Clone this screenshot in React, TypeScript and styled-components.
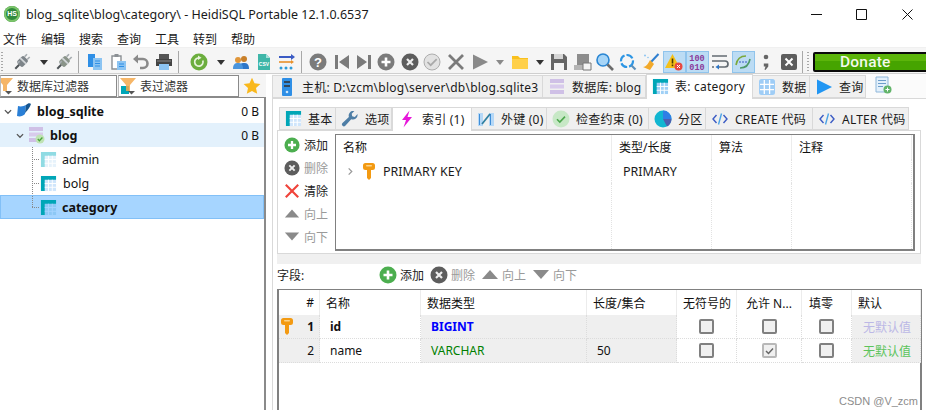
import React from "react";
import styled, { createGlobalStyle } from "styled-components";

const GlobalStyle = createGlobalStyle`
  html, body { margin: 0; padding: 0; background: #fff; }
  body {
    width: 926px; height: 410px; overflow: hidden;
    font-family: "Noto Sans", "Noto Sans CJK SC", sans-serif;
    font-size: 12px; color: #1a1a1a;
  }
`;

const G = ({ s = 18, children }: { s?: number; children: React.ReactNode }) => (
  <svg width={s} height={s} viewBox="0 0 18 18">{children}</svg>
);

// ---------- icons ----------
const Plug = ({ accent = "#7d8489" }: { accent?: string }) => (
  <G>
    <g transform="rotate(45 9 9)">
      <rect x="5" y="3.5" width="8" height="9.500" rx="2" fill={accent} />
      <rect x="6.300" y="0" width="1.600" height="3.500" fill="#a5abaf" />
      <rect x="10.100" y="0" width="1.600" height="3.500" fill="#a5abaf" />
      <rect x="8" y="13" width="2" height="5.500" fill="#4f5558" />
      <rect x="5" y="6.500" width="8" height="1.800" fill="#d2d6d9" />
      <rect x="6" y="10" width="1.500" height="3" fill="#a9afb3" />
    </g>
  </G>
);
const Arrow = ({ color = "#333" }: { color?: string }) => (
  <svg width="8" height="5" viewBox="0 0 8 5"><path d="M0 0h8L4 5z" fill={color} /></svg>
);
const Docs = () => (
  <G>
    <path d="M2 1h7v13H2z" fill="#2f8fe6" />
    <path d="M7 5h9v12H7z" fill="#8cc4f2" />
    <path d="M9 8h5M9 10.5h5M9 13h5" stroke="#2f8fe6" strokeWidth="1" />
  </G>
);
const Paste = () => (
  <G>
    <path d="M3 3h9v13H3z" fill="#fff" stroke="#8b9094" strokeWidth="1.4" />
    <path d="M5.5 1h4v3h-4z" fill="#8b9094" />
    <path d="M8 8h9v9H8z" fill="#8cc4f2" />
    <path d="M10 11h5M10 13.5h5" stroke="#2f8fe6" />
  </G>
);
const Undo = () => (
  <G>
    <path d="M1 6l5-4.500v9z" fill="#8a8a8a" />
    <path d="M5 6h6a4.500 4.500 0 0 1 0 9H8" fill="none" stroke="#8a8a8a" strokeWidth="2.6" />
  </G>
);
const Printer = () => (
  <G>
    <path d="M4 1h10v5H4z" fill="#555" />
    <path d="M1 6h16v7H1z" fill="#444" />
    <path d="M4 11h10v6H4z" fill="#8cc4f2" />
    <path d="M2 8h14" stroke="#888" />
  </G>
);
const Refresh = () => (
  <G>
    <circle cx="9" cy="9" r="8.5" fill="#6cae3e" />
    <path d="M12.8 7.5A4.2 4.2 0 1 1 9 4.8" fill="none" stroke="#e8f4dd" strokeWidth="1.7" />
    <path d="M8 2.5l3.500 2.300L8 7z" fill="#e8f4dd" />
  </G>
);
const Users = () => (
  <G>
    <circle cx="12" cy="6" r="3" fill="#c9802a" />
    <path d="M7 16c0-5 2-6 5-6s5 1 5 6z" fill="#2f77c8" />
    <circle cx="6" cy="7" r="3" fill="#e0963a" />
    <path d="M1 16c0-5 2-6 5-6s5 1 5 6z" fill="#4a95dd" />
  </G>
);
const Csv = () => (
  <G>
    <path d="M3 1h8l4 4v12H3z" fill="#3fb6a8" />
    <path d="M11 1l4 4h-4z" fill="#a5e0d9" />
    <text x="9" y="13" fontSize="5" fontWeight="700" textAnchor="middle" fill="#fff" fontFamily="Liberation Sans">CSV</text>
  </G>
);
const Transfer = () => (
  <G>
    <path d="M1 4h13" stroke="#3b5bc4" strokeWidth="2" />
    <path d="M13 1l4 3-4 3z" fill="#3b5bc4" />
    <path d="M1 9h13" stroke="#e8902a" strokeWidth="1.6" />
    <path d="M13 7l3 2-3 2z" fill="#e8902a" />
    <circle cx="3" cy="15" r="1.5" fill="#2d9bd8" />
    <circle cx="8" cy="15" r="1.5" fill="#2d9bd8" />
    <circle cx="13" cy="15" r="1.5" fill="#2d9bd8" />
  </G>
);
const Help = () => (
  <G>
    <circle cx="9" cy="9" r="8.5" fill="#7b7b7b" />
    <text x="9" y="13.5" fontSize="13" fontWeight="700" textAnchor="middle" fill="#fff" fontFamily="Liberation Sans">?</text>
  </G>
);
const First = () => (
  <G><path d="M2 2h3v14H2zM16 2v14L6 9z" fill="#7b7b7b" /></G>
);
const Last = () => (
  <G><path d="M13 2h3v14h-3zM2 2v14l10-7z" fill="#7b7b7b" /></G>
);
const PlusCircle = ({ bg = "#7b7b7b" }: { bg?: string }) => (
  <G>
    <circle cx="9" cy="9" r="8.5" fill={bg} />
    <path d="M9 4.500v9M4.500 9h9" stroke="#fff" strokeWidth="2.6" />
  </G>
);
const XCircle = ({ bg = "#5d5d5d" }: { bg?: string }) => (
  <G>
    <circle cx="9" cy="9" r="8.5" fill={bg} />
    <path d="M6 6l6 6M12 6l-6 6" stroke="#eee" strokeWidth="2.2" />
  </G>
);
const CheckCircle = () => (
  <G>
    <circle cx="9" cy="9" r="8" fill="#e2e2e2" stroke="#adadad" />
    <path d="M4.5 9l3.200 3.200 6-6" fill="none" stroke="#a9a9a9" strokeWidth="1.7" />
  </G>
);
const BigX = ({ color = "#7b7b7b" }: { color?: string }) => (
  <G><path d="M2 2l14 14M16 2L2 16" stroke={color} strokeWidth="2.8" /></G>
);
const Play = ({ color = "#8a8a8a" }: { color?: string }) => (
  <G><path d="M2 1.5v15L17 9z" fill={color} /></G>
);
const Folder = () => (
  <G>
    <path d="M1 3h6l2 2h8v11H1z" fill="#f9c01e" />
    <path d="M1 6h16v10H1z" fill="#ffd04a" />
  </G>
);
const Floppy = ({ color = "#666" }: { color?: string }) => (
  <G>
    <path d="M1 1h13l3 3v13H1z" fill={color} />
    <path d="M4 1h9v5H4z" fill="#d5d5d5" />
    <path d="M4 10h10v7H4z" fill="#f4f4f4" />
  </G>
);
const SaveAs = () => (
  <G>
    <path d="M3 1h12v11H3z" fill="#8d8d8d" />
    <path d="M0 12h12v5H0z" fill="#b5b5b5" />
    <path d="M9 10h8v7H9z" fill="#f4f4f4" stroke="#777" />
  </G>
);
const Search = () => (
  <G>
    <circle cx="7" cy="7" r="6" fill="#a7d5f7" stroke="#2a86d3" strokeWidth="1.6" />
    <path d="M11.5 11.5l5.500 5.500" stroke="#6b6b6b" strokeWidth="2.6" />
  </G>
);
const Replace = () => (
  <G>
    <circle cx="8" cy="8" r="6" fill="none" stroke="#2e96e4" strokeWidth="2.2" strokeDasharray="7 2" />
    <path d="M12.5 12.5l4 4" stroke="#5d8fb8" strokeWidth="2.2" />
  </G>
);
const Broom = () => (
  <G>
    <path d="M16.5 1L9 9" stroke="#2f7fd0" strokeWidth="2" />
    <path d="M8 7l4 4-4 6-7-3c3 0 5-3 7-7z" fill="#f2a92a" />
    <circle cx="3" cy="2.5" r="1" fill="#8cc4f2" />
    <circle cx="6" cy="4.5" r=".8" fill="#8cc4f2" />
  </G>
);
const Warn = () => (
  <G>
    <path d="M7.5 1L15 15H0z" fill="#f5c018" />
    <path d="M7.5 5.5v5M7.5 11.5v1.800" stroke="#4a3a00" strokeWidth="1.6" />
    <circle cx="13.5" cy="13.5" r="4" fill="#e8483f" />
    <path d="M12 12l3 3M15 12l-3 3" stroke="#fff" />
  </G>
);
const Binary = () => (
  <G>
    <text x="9" y="8" fontSize="8.5" fontWeight="700" textAnchor="middle" fill="#8a3a9a" fontFamily="Liberation Mono">100</text>
    <text x="9" y="16.5" fontSize="8.5" fontWeight="700" textAnchor="middle" fill="#8a3a9a" fontFamily="Liberation Mono">010</text>
  </G>
);
const WrapLines = () => (
  <G>
    <path d="M1 3h15M1 8h13a3 3 0 0 1 0 6H8" fill="none" stroke="#636b72" strokeWidth="1.7" />
    <path d="M8 11.5v5L4.500 14z" fill="#2f77c8" />
    <path d="M1 14h2" stroke="#636b72" strokeWidth="1.7" />
  </G>
);
const Sync = () => (
  <G>
    <path d="M2 12C3 6 6 3 12 3" fill="none" stroke="#7ba83d" strokeWidth="1.6" />
    <path d="M16 6c-1 6-4 9-10 9" fill="none" stroke="#4f9a6a" strokeWidth="1.6" />
    <path d="M5 9h8" stroke="#3b5bc4" strokeDasharray="2 1" />
  </G>
);
const Semi = () => (
  <G>
    <circle cx="9" cy="4" r="2.3" fill="#666" />
    <path d="M6.8 10.5h4.500v3L8.500 17l-1-.6 1-3h-1.700z" fill="#666" />
  </G>
);
const XBox = () => (
  <G>
    <rect x="1" y="1" width="16" height="16" rx="2" fill="#5d5d5d" />
    <path d="M5.5 5.5l7 7M12.5 5.5l-7 7" stroke="#fff" strokeWidth="2" />
  </G>
);
const Funnel = ({ children }: { children?: React.ReactNode }) => (
  <G>
    {children}
    <path d="M1 1h16l-6 7v6H7V8z" fill="#f4a94e" opacity=".85" />
    <path d="M9 14h7l-3.500 3.500z" fill="#555" />
  </G>
);
const Star = () => (
  <G>
    <path d="M9 .8l2.500 5.400 5.900.7-4.400 4 1.200 5.900L9 13.900l-5.200 2.900L5 10.900.6 6.900l5.900-.7z" fill="#f9b81c" />
  </G>
);
const Server = () => (
  <G>
    <rect x="4" y="0" width="10" height="18" rx="1" fill="#2f8fe6" />
    <path d="M6 3h6v2H6zM6 7h6v2H6z" fill="#33475b" />
    <circle cx="9" cy="14" r="1.3" fill="#cfe7fb" />
  </G>
);
const DbIcon = ({ ok }: { ok?: boolean }) => (
  <G>
    <path d="M2 1h14v4H2z" fill="#cfc0e6" />
    <path d="M2 6.500h14v4H2z" fill="#d8cbec" />
    <path d="M2 12h14v4H2z" fill="#cfc0e6" />
    {ok && (
      <>
        <circle cx="13" cy="13" r="4.5" fill="#bfe3b4" />
        <path d="M10.8 13l1.600 1.700 3-3.200" fill="none" stroke="#49a53a" strokeWidth="1.3" />
      </>
    )}
  </G>
);
const TableIcon = ({ head = "#00a6b7", body = "#cfe5fb", line = "#fff" }: { head?: string; body?: string; line?: string }) => (
  <G s={17}>
    <rect x="1" y="1" width="16" height="16" fill={body} />
    <path d="M1 1h16v4H5v12H1z" fill={head} />
    <path d="M9 5v12M13 5v12M5 9h12M5 13h12" stroke={line} strokeWidth="1" />
  </G>
);
const GridBlue = () => (
  <G>
    <rect x="1" y="1" width="16" height="16" rx="2.5" fill="#9fcdf6" />
    <path d="M6.3 2v14M11.6 2v14M2 6.300h14M2 11.600h14" stroke="#fff" strokeWidth="1.3" />
  </G>
);
const NewTab = () => (
  <G>
    <path d="M2 1h12v15H2z" fill="#e3f0fb" stroke="#8fb7da" />
    <path d="M4 4.500h8M4 7.500h8M4 10.500h5" stroke="#6d9ecb" />
    <circle cx="13.5" cy="13.5" r="4" fill="#62b46a" />
    <path d="M13.5 11.5v4M11.5 13.5h4" stroke="#fff" />
  </G>
);
const Wrench = () => (
  <G>
    <path d="M16.5 4a4.700 4.700 0 0 1-6.300 5.200L4.300 15.700a1.900 1.900 0 0 1-2.800-2.700l6.400-6A4.700 4.700 0 0 1 13.400 1l-2.700 2.700.5 2.600 2.600.6z" fill="#4e7ea6" />
  </G>
);
const Bolt = () => (
  <G><path d="M11.500.5L4 10h4l-2.500 7.500L14 7H9.500z" fill="#e617d9" /></G>
);
const FkIcon = () => (
  <G>
    <path d="M1 3h5v13H1zM12 3h5v13h-5z" fill="#b5d8f7" />
    <path d="M2 4h1v11H2zM13 4h1v11h-1z" fill="#3f8ed8" />
    <path d="M5 14L13 4" stroke="#2f7fa0" strokeWidth="1.8" />
  </G>
);
const CheckGreen = () => (
  <G>
    <circle cx="9" cy="9" r="8.5" fill="#c7e8c6" />
    <path d="M5 9.200l2.800 2.800 5.200-5.400" fill="none" stroke="#4da74d" strokeWidth="1.6" />
  </G>
);
const Pie = () => (
  <G>
    <circle cx="9" cy="9" r="8.5" fill="#11b6d1" />
    <path d="M9 9V.5A8.500 8.500 0 0 1 17.500 9z" fill="#2f7fe6" />
    <path d="M9 9h8.500A8.500 8.500 0 0 1 13 16.500z" fill="#4d5fb0" />
  </G>
);
const Code = () => (
  <G>
    <path d="M5.5 5L2 9l3.500 4" fill="none" stroke="#3b5bc4" strokeWidth="1.4" />
    <path d="M12.5 5L16 9l-3.500 4" fill="none" stroke="#3b5bc4" strokeWidth="1.4" />
    <path d="M10.5 3.5L7.500 14.500" stroke="#4ba3e6" strokeWidth="1.4" />
  </G>
);
const KeyIcon = () => (
  <svg width="12" height="17" viewBox="0 0 12 17">
    <path d="M2.500 0h7A2.500 2.500 0 0 1 12 2.500v2A2.500 2.500 0 0 1 9.500 7H8v8l-2 2-2-2V7H2.500A2.500 2.500 0 0 1 0 4.500v-2A2.500 2.500 0 0 1 2.500 0z" fill="#f39a12" />
    <rect x="3" y="2" width="6" height="1.5" rx=".7" fill="#fcd48a" />
  </svg>
);
const RedX = () => (
  <G><path d="M2 2l14 14M16 2L2 16" stroke="#f0433a" strokeWidth="2.4" /></G>
);
const TriUp = () => (
  <svg width="18" height="9" viewBox="-1 0 18 9"><path d="M8 0l8 9H0z" fill="#8a8a8a" /></svg>
);
const TriDown = () => (
  <svg width="18" height="9" viewBox="-1 0 18 9"><path d="M0 0h16L8 9z" fill="#8a8a8a" /></svg>
);

// ---------- title + menu ----------
const TitleBar = styled.div`
  height: 28px; display: flex; align-items: center; background: #fff;
  padding-left: 4px; font-size: 12.5px; margin-right: -4px;
`;
const AppBadge = styled.div`
  width: 16px; height: 16px; border-radius: 50%; background: #2f8a3c; color: #fff;
  font: 700 7px/16px "Liberation Sans", sans-serif; text-align: center;
  box-shadow: inset 0 0 0 2px #7cc46a; margin-right: 6px;
`;
const TitleText = styled.span`flex: 1; white-space: nowrap;`;
const WinButton = styled.div`
  width: 45.5px; height: 28px; display: flex; align-items: center; justify-content: center;
`;
const MenuBar = styled.div`
  height: 19px; display: flex; align-items: center; gap: 14px; padding: 2px 0 0 3px; background: #fff;
  box-sizing: border-box;
`;

// ---------- toolbar ----------
const Toolbar = styled.div`
  height: 27px; display: flex; align-items: center; overflow: hidden;
  background: #f5f5f5; border-bottom: 1px solid #cfcfcf; border-top: 1px solid #f0f0f0;
  box-sizing: border-box; padding-top: 3px;
`;
const Slot = styled.div<{ $w: number; $ml: number; $on?: boolean }>`
  flex: none; width: ${(p) => p.$w}px; height: 22px; margin-left: ${(p) => p.$ml}px;
  display: flex; align-items: center; justify-content: center; box-sizing: border-box;
  ${(p) => p.$on && "background: #bcdcf4; border: 1px solid #90c4ec;"}
`;
const Sep = styled.div`width: 1px; height: 22px; background: #a8a8a8;`;
const Grip = styled.div`
  width: 2px; height: 20px;
  background: repeating-linear-gradient(to bottom, #a8a8a8 0 1px, transparent 1px 3px);
`;
const Donate = styled.div`
  flex: none; width: 126px; height: 20px; box-sizing: border-box; margin-left: 4px;
  border: 2px solid #0a0a0a; border-radius: 2px;
  background: linear-gradient(to bottom, #5cb50a 0 45%, #46a400 45% 100%);
  color: #f4f9ec; font: 500 15.5px/16px Roboto, sans-serif; letter-spacing: .2px;
  padding-left: 25px;
`;

// ---------- body ----------
const Body = styled.div`display: flex; height: 336px;`;
const LeftPane = styled.div`width: 266px; flex: none; display: flex; flex-direction: column;`;
const FilterRow = styled.div`
  height: 23px; display: flex; background: #f5f5f5; box-sizing: border-box; padding-top: 1px;
`;
const FilterBox = styled.div<{ $w: number; $inset?: number }>`
  width: ${(p) => p.$w}px; flex: none; box-sizing: border-box; background: #fff;
  border: 1px solid #8a8a8a; border-left-color: #bbb; display: flex; align-items: center; gap: 3px; color: #333;
  margin-right: 1px; overflow: hidden;
  & > svg { flex: none; margin-left: ${(p) => p.$inset ?? 0}px; }
`;
const StarCell = styled.div`flex: 1; display: flex; justify-content: center; align-items: center; padding-right: 2px;`;
const Tree = styled.div`
  flex: 1; background: #fff; padding-top: 1px;
  border-top: 1px solid #8a8a8a; border-right: 2px solid #8a8a8a;
`;
const TreeRow = styled.div<{ $kind?: "hover" | "sel"; $bold?: boolean }>`
  height: 24px; box-sizing: border-box; display: flex; align-items: center; padding-right: 4px;
  font-weight: ${(p) => (p.$bold ? 700 : 400)}; color: #111;
  background: ${(p) => (p.$kind === "hover" ? "#e3f1fc" : p.$kind === "sel" ? "#a6d5ff" : "transparent")};
  border: ${(p) => (p.$kind === "sel" ? "1px solid #82c0f7" : "none")};
`;
const Chevron = styled.span<{ $indent: number }>`
  width: 8px; height: 8px; margin-left: ${(p) => p.$indent}px; flex: none;
  display: flex; align-items: center;
`;
const Connector = styled.div<{ $last?: boolean }>`
  flex: none; align-self: stretch; width: 8px; margin-left: ${(p) => (p.$last ? 31 : 32)}px;
  background:
    repeating-linear-gradient(to bottom, #888 0 1px, transparent 1px 2px) left top / 1px ${(p) => (p.$last ? "12px" : "100%")} no-repeat,
    repeating-linear-gradient(to right, #888 0 1px, transparent 1px 2px) left ${(p) => (p.$last ? 11 : 12)}px / 100% 1px no-repeat;
`;
const TreeLabel = styled.span<{ $ml: number }>`margin-left: ${(p) => p.$ml}px; flex: 1; font-size: 12.5px;`;
const TreeIcon = styled.span<{ $ml: number }>`margin-left: ${(p) => p.$ml}px; display: flex; flex: none;`;
const Size = styled.span`font-size: 12px; font-weight: 400; margin-right: 1px;`;

const RightPane = styled.div`flex: 1; min-width: 0; display: flex; flex-direction: column; padding-left: 6px;`;
const TabStrip = styled.div`
  height: 25px; flex: none; display: flex; align-items: flex-end; box-sizing: border-box;
  border-bottom: 1px solid #d9d9d9; background: #fbfbfb;
`;
const Tab = styled.div<{ $w: number; $active?: boolean; $h?: number }>`
  width: ${(p) => p.$w}px; height: ${(p) => p.$h ?? (p.$active ? 25 : 23)}px; flex: none; box-sizing: border-box;
  display: flex; align-items: center; gap: 6px; padding-left: 5px; white-space: nowrap; letter-spacing: .22px;
  background: ${(p) => (p.$active ? "#fff" : "#f0f0f0")};
  border: 1px solid #d9d9d9; border-left-width: ${(p) => (p.$active ? 1 : 0)}px;
  border-bottom: ${(p) => (p.$active ? "none" : "1px solid #d9d9d9")};
  ${(p) => p.$active && "margin-bottom: -1px; padding-bottom: 2px; position: relative;"}
  &:first-child { border-left-width: 1px; }
`;
const BareTab = styled.div`flex: none; margin: 0 0 4px 8px; display: flex;`;
const TabPage = styled.div`
  flex: 1; background: #fff; border-left: 1px solid #d9d9d9; padding: 7px 5px 0 4px;
  display: flex; flex-direction: column;
`;
const SubTabs = styled.div`height: 24px; flex: none; display: flex; align-items: flex-end; padding-left: 2px; width: 631px;`;
const IndexPanel = styled.div`
  height: 124px; flex: none; width: 644px; box-sizing: border-box; background: #fff;
  border: 1px solid #d9d9d9; display: flex; gap: 5px; padding: 3px 5px 2px 0;
`;
const SideButtons = styled.div`
  width: 52px; flex: none; display: flex; flex-direction: column; margin-top: -1px;
`;
const SideButton = styled.div<{ $off?: boolean }>`
  height: 23px; display: flex; align-items: center; gap: 4px; padding-left: 6px;
  color: ${(p) => (p.$off ? "#9a9a9a" : "#222")};
  & > svg { flex: none; width: 16px; }
`;
const IndexList = styled.div`
  flex: 1; border: solid #808080; border-width: 1px 2px 2px 1px; box-sizing: border-box;
  display: grid; grid-template-columns: 276px 100px 80px 120px; grid-template-rows: 24px 24px 1fr;
`;
const IdxHead = styled.div`
  display: flex; align-items: center; padding-left: 7px; box-sizing: border-box;
  border-right: 1px solid #ececec; color: #111;
`;
const IdxCell = styled.div`
  display: flex; align-items: center; box-sizing: border-box; border-right: 1px dotted #e2e2e2;
`;
const Filler = styled.div`border-right: 1px dotted #e2e2e2;`;
const Band = styled.div`height: 10px; flex: none; width: 644px; background: #f0f0f0;`;
const FieldBar = styled.div`
  height: 25px; flex: none; display: flex; align-items: center; width: 644px;
  box-sizing: border-box; padding-bottom: 4px;
`;
const FieldLabel = styled.span`width: 102px; flex: none; color: #222;`;
const FieldAction = styled.div<{ $off?: boolean }>`
  display: flex; align-items: center; gap: 3px; margin-right: 6px; flex: none;
  color: ${(p) => (p.$off ? "#9a9a9a" : "#222")};
`;
const GridBox = styled.div`
  flex: 1; width: 645px; box-sizing: border-box; border: solid #808080; border-width: 1px 2px 0 2px;
  display: grid; align-content: start;
  grid-template-columns: 41px 101px 166px 90px 60px 65px 50px 69px;
  grid-template-rows: 25px 24px 24px;
  background: #fff;
`;
const Head = styled.div<{ $right?: boolean; $pl?: number }>`
  display: flex; align-items: center; padding-left: ${(p) => p.$pl ?? 6}px; box-sizing: border-box; color: #111;
  border-right: 1px solid #ececec;
  justify-content: ${(p) => (p.$right ? "flex-end" : "flex-start")};
  ${(p) => p.$right && "padding-right: 5px;"}
`;
const Cell = styled.div<{ $shade?: boolean; $center?: boolean; $color?: string; $bold?: boolean; $pl?: number }>`
  display: flex; align-items: center; box-sizing: border-box;
  justify-content: ${(p) => (p.$center ? "center" : "flex-start")};
  padding-left: ${(p) => (p.$center ? 0 : p.$pl ?? 10)}px;
  background: ${(p) => (p.$shade ? "#efefef" : "#fff")};
  color: ${(p) => p.$color ?? "#111"};
  font-weight: ${(p) => (p.$bold ? 700 : 400)};
  border-bottom: 1px dotted #dcdcdc; border-right: 1px dotted #dcdcdc;
`;
const NumCell = styled(Cell)`justify-content: space-between; padding: 0 5px 0 2px;`;
const Check = styled.div<{ $on?: boolean }>`
  width: 15px; height: 15px; box-sizing: border-box; border-radius: 2px; background: #f0f0f0;
  border: 2px solid ${(p) => (p.$on ? "#b8b8b8" : "#808080")};
  display: flex; align-items: center; justify-content: center;
`;
const Watermark = styled.div`
  position: absolute; right: 8px; bottom: 3px; font: 11px "Liberation Sans", sans-serif; color: #8c8c8c;
`;
const Root = styled.div`width: 926px; height: 410px; overflow: hidden; position: relative;`;

// ---------- data ----------
type Tool = { c: number; w?: number; el?: React.ReactNode; on?: boolean };
const tools: Tool[] = [
  { c: 2, w: 2, el: <Grip /> },
  { c: 22, el: <Plug /> },
  { c: 44, w: 10, el: <Arrow /> },
  { c: 64, el: <Plug accent="#8a9489" /> },
  { c: 78, w: 1, el: <Sep /> },
  { c: 95, el: <Docs /> },
  { c: 118, el: <Paste /> },
  { c: 141, el: <Undo /> },
  { c: 164, el: <Printer /> },
  { c: 178, w: 1, el: <Sep /> },
  { c: 199, el: <Refresh /> },
  { c: 221, w: 10, el: <Arrow /> },
  { c: 241, el: <Users /> },
  { c: 264, el: <Csv /> },
  { c: 287, el: <Transfer /> },
  { c: 301, w: 1, el: <Sep /> },
  { c: 318, el: <Help /> },
  { c: 342, el: <First /> },
  { c: 364, el: <Last /> },
  { c: 386, el: <PlusCircle /> },
  { c: 410, el: <XCircle /> },
  { c: 432, el: <CheckCircle /> },
  { c: 456, el: <BigX /> },
  { c: 480, el: <Play /> },
  { c: 500, w: 10, el: <Arrow color="#8a8a8a" /> },
  { c: 520, el: <Folder /> },
  { c: 540, w: 10, el: <Arrow /> },
  { c: 559, el: <Floppy /> },
  { c: 583, el: <SaveAs /> },
  { c: 605, el: <Search /> },
  { c: 628, el: <Replace /> },
  { c: 651, el: <Broom /> },
  { c: 674, w: 23, el: <Warn />, on: true },
  { c: 697, w: 23, el: <Binary />, on: true },
  { c: 720, el: <WrapLines /> },
  { c: 743, w: 23, el: <Sync />, on: true },
  { c: 766, el: <Semi /> },
  { c: 789, el: <XBox /> },
  { c: 802, w: 1, el: <Sep /> },
  { c: 808, w: 2, el: <Grip /> },
];

const ToolSlots = () => {
  let end = 0;
  return (
    <>
      {tools.map((t) => {
        const w = t.w ?? 18;
        const ml = t.c - w / 2 - end;
        end = t.c + w / 2;
        return (
          <Slot key={t.c} $w={w} $ml={ml} $on={t.on}>
            {t.el}
          </Slot>
        );
      })}
    </>
  );
};

const subTabs = [
  { label: "基本", w: 57, icon: <TableIcon /> },
  { label: "选项", w: 56, icon: <Wrench /> },
  { label: "索引 (1)", w: 80, icon: <Bolt />, active: true },
  { label: "外键 (0)", w: 75, icon: <FkIcon /> },
  { label: "检查约束 (0)", w: 102, icon: <CheckGreen /> },
  { label: "分区", w: 57, icon: <Pie /> },
  { label: "CREATE 代码", w: 107, icon: <Code /> },
  { label: "ALTER 代码", w: 96, icon: <Code /> },
];

const Chev = ({ right }: { right?: boolean }) => (
  <svg width="9" height="9" viewBox="0 0 9 9">
    <path d={right ? "M3 1l3.500 3.500L3 8" : "M1 3l3.500 3.500L8 3"} fill="none" stroke={right ? "#9a9a9a" : "#555"} strokeWidth="1.4" />
  </svg>
);

export default function App() {
  return (
    <Root>
      <GlobalStyle />
      <TitleBar>
        <AppBadge>HS</AppBadge>
        <TitleText>blog_sqlite\blog\category\ - HeidiSQL Portable 12.1.0.6537</TitleText>
        <WinButton>
          <svg width="11" height="11" viewBox="0 0 11 11"><path d="M0 5.500h11" stroke="#111" /></svg>
        </WinButton>
        <WinButton>
          <svg width="11" height="11" viewBox="0 0 11 11"><path d="M.5.500h10v10H.500z" fill="none" stroke="#111" /></svg>
        </WinButton>
        <WinButton>
          <svg width="11" height="11" viewBox="0 0 11 11"><path d="M.5.500l10 10M10.500.500l-10 10" stroke="#111" /></svg>
        </WinButton>
      </TitleBar>
      <MenuBar>
        {["文件", "编辑", "搜索", "查询", "工具", "转到", "帮助"].map((m) => (
          <span key={m}>{m}</span>
        ))}
      </MenuBar>
      <Toolbar>
        <ToolSlots />
        <Donate>Donate</Donate>
      </Toolbar>
      <Body>
        <LeftPane>
          <FilterRow>
            <FilterBox $w={117} $inset={-5}>
              <Funnel />
              <span>数据库过滤器</span>
            </FilterBox>
            <FilterBox $w={121}>
              <Funnel>
                <path d="M2 9h8v8H2z" fill="#00a6b7" />
              </Funnel>
              <span>表过滤器</span>
            </FilterBox>
            <StarCell><Star /></StarCell>
          </FilterRow>
          <Tree>
            <TreeRow $bold>
              <Chevron $indent={4}><Chev /></Chevron>
              <TreeIcon $ml={4}>
                <svg width="16" height="16" viewBox="0 0 16 16">
                  <path d="M2 3c3 1 6 0 8-1l-1 9c-2 2-5 3-8 2z" fill="#2a7fd6" />
                  <path d="M10 2c2-2 4-2 5-1-1 3-3 6-6 9z" fill="#16558f" />
                </svg>
              </TreeIcon>
              <TreeLabel $ml={5}>blog_sqlite</TreeLabel>
              <Size>0 B</Size>
            </TreeRow>
            <TreeRow $bold $kind="hover">
              <Chevron $indent={16}><Chev /></Chevron>
              <TreeIcon $ml={3}><DbIcon ok /></TreeIcon>
              <TreeLabel $ml={5}>blog</TreeLabel>
              <Size>0 B</Size>
            </TreeRow>
            <TreeRow>
              <Connector />
              <TreeIcon $ml={0}>
                <TableIcon head="#8fdbe3" body="#e6f2fb" />
              </TreeIcon>
              <TreeLabel $ml={5}>admin</TreeLabel>
            </TreeRow>
            <TreeRow>
              <Connector />
              <TreeIcon $ml={0}><TableIcon /></TreeIcon>
              <TreeLabel $ml={6}>bolg</TreeLabel>
            </TreeRow>
            <TreeRow $kind="sel" $bold>
              <Connector $last />
              <TreeIcon $ml={0}>
                <TableIcon body="#8cc8f5" line="#a6d5ff" />
              </TreeIcon>
              <TreeLabel $ml={5}>category</TreeLabel>
            </TreeRow>
          </Tree>
        </LeftPane>
        <RightPane>
          <TabStrip>
            <Tab $w={271}><Server />主机: D:\zcm\blog\server\db\blog.sqlite3</Tab>
            <Tab $w={103}><DbIcon />数据库: blog</Tab>
            <Tab $w={107} $active><TableIcon head="#00a6b7" body="#9fd0f6" />表: category</Tab>
            <Tab $w={57}><GridBlue />数据</Tab>
            <Tab $w={56}><Play color="#2196f3" />查询</Tab>
            <BareTab><NewTab /></BareTab>
          </TabStrip>
          <TabPage>
            <SubTabs>
              {subTabs.map((t) => (
                <Tab key={t.label} $w={t.w} $active={t.active} $h={t.active ? 24 : 23}>
                  {t.icon}{t.label}
                </Tab>
              ))}
            </SubTabs>
            <IndexPanel>
              <SideButtons>
                <SideButton><PlusCircle bg="#4cae4f" />添加</SideButton>
                <SideButton $off><XCircle />删除</SideButton>
                <SideButton><RedX />清除</SideButton>
                <SideButton $off><TriUp />向上</SideButton>
                <SideButton $off><TriDown />向下</SideButton>
              </SideButtons>
              <IndexList>
                <IdxHead>名称</IdxHead>
                <IdxHead>类型/长度</IdxHead>
                <IdxHead>算法</IdxHead>
                <IdxHead>注释</IdxHead>
                <IdxCell>
                  <Chevron $indent={10}><Chev right /></Chevron>
                  <TreeIcon $ml={9}><KeyIcon /></TreeIcon>
                  <TreeLabel $ml={8}>PRIMARY KEY</TreeLabel>
                </IdxCell>
                <IdxCell><TreeLabel $ml={11}>PRIMARY</TreeLabel></IdxCell>
                <Filler />
                <Filler />
                <Filler />
                <Filler />
                <Filler />
                <Filler />
              </IndexList>
            </IndexPanel>
            <Band />
            <FieldBar>
              <FieldLabel>字段:</FieldLabel>
              <FieldAction><PlusCircle bg="#4cae4f" />添加</FieldAction>
              <FieldAction $off><XCircle />删除</FieldAction>
              <FieldAction $off><TriUp />向上</FieldAction>
              <FieldAction $off><TriDown />向下</FieldAction>
            </FieldBar>
            <GridBox>
              <Head $right>#</Head>
              <Head>名称</Head>
              <Head>数据类型</Head>
              <Head>长度/集合</Head>
              <Head>无符号的</Head>
              <Head $pl={9}>允许 N...</Head>
              <Head $pl={7}>填零</Head>
              <Head>默认</Head>

              <NumCell $shade $bold><KeyIcon />1</NumCell>
              <Cell $bold>id</Cell>
              <Cell $shade $bold $color="#0000ff">BIGINT</Cell>
              <Cell $shade />
              <Cell $center><Check /></Cell>
              <Cell $center><Check /></Cell>
              <Cell $center><Check /></Cell>
              <Cell $shade $color="#bcb8e6" $pl={11}>无默认值</Cell>

              <NumCell $shade><span />2</NumCell>
              <Cell>name</Cell>
              <Cell $shade $color="#008000">VARCHAR</Cell>
              <Cell $shade>50</Cell>
              <Cell $center><Check /></Cell>
              <Cell $center>
                <Check $on>
                  <svg width="9" height="8" viewBox="0 0 9 8"><path d="M1 4l2.500 2.500L8 1.500" fill="none" stroke="#666" strokeWidth="1.5" /></svg>
                </Check>
              </Cell>
              <Cell $center><Check /></Cell>
              <Cell $shade $color="#5cc45c" $pl={11}>无默认值</Cell>
            </GridBox>
          </TabPage>
        </RightPane>
      </Body>
      <Watermark>CSDN @V_zcm</Watermark>
    </Root>
  );
}
